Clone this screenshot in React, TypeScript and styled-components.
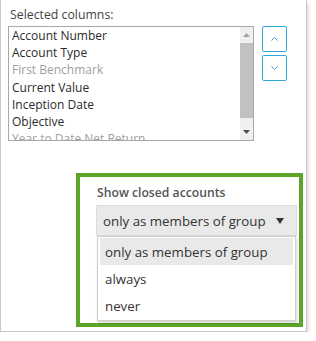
import * as React from 'react';
import styled, { createGlobalStyle } from 'styled-components';

const GlobalStyle = createGlobalStyle`
  html, body {
    margin: 0;
    padding: 0;
    background: #ffffff;
  }
  body {
    font-family: 'Open Sans', 'Noto Sans', Arial, sans-serif;
    color: #333333;
  }
`;

const Panel = styled.div`
  box-sizing: border-box;
  width: 307px;
  height: 332px;
  background: #ffffff;
  border: 1px solid #c6c6c6;
  border-top: none;
  box-shadow: 2px 3px 3px rgba(0, 0, 0, 0.12);
  display: flex;
  flex-direction: column;
  padding: 7px 0 0 7px;
`;

const FieldLabel = styled.div`
  font-size: 12.3px;
  line-height: 16px;
  color: #444444;
  padding-left: 2px;
  height: 19px;
`;

const ColumnsRow = styled.div`
  display: flex;
  align-items: flex-start;
  gap: 8px;
`;

const ListBox = styled.div`
  box-sizing: border-box;
  width: 246px;
  height: 115px;
  border: 1px solid #a9a9a9;
  display: flex;
  overflow: hidden;
`;

const ListItems = styled.div`
  flex: 1;
  padding: 0 0 0 3px;
  overflow: hidden;
`;

const ListItem = styled.div<{ $muted?: boolean }>`
  font-size: 12px;
  line-height: 17.2px;
  white-space: nowrap;
  color: ${(p) => (p.$muted ? '#a0a0a0' : '#2b2b2b')};
`;

const ScrollTrack = styled.div`
  width: 13px;
  background: #f0f0f0;
  display: flex;
  flex-direction: column;
  align-items: center;
`;

const ScrollArrow = styled.div`
  height: 16px;
  display: flex;
  align-items: center;
  justify-content: center;
`;

const ScrollThumb = styled.div`
  width: 13px;
  height: 75px;
  background: #c1c1c1;
`;

const ScrollSpacer = styled.div`
  flex: 1;
`;

const MoveButtons = styled.div`
  display: flex;
  flex-direction: column;
  gap: 3px;
`;

const MoveButton = styled.button`
  box-sizing: border-box;
  width: 25px;
  height: 26px;
  padding: 0;
  background: #ffffff;
  border: 1px solid #2ea6de;
  border-radius: 2px;
  display: flex;
  align-items: center;
  justify-content: center;
  cursor: pointer;
`;

const Callout = styled.div`
  box-sizing: border-box;
  margin: 32px 0 0 68px;
  width: 227px;
  height: 154px;
  border: 4px solid #5da529;
  padding: 8px 2px 0 16px;
  display: flex;
  flex-direction: column;
`;

const GroupLabel = styled.div`
  font-size: 12.2px;
  line-height: 16px;
  color: #555555;
  font-weight: 600;
  height: 20px;
  padding-left: 1px;
`;

const SelectBox = styled.div`
  box-sizing: border-box;
  height: 31px;
  background: #e9e9e9;
  border: 1px solid #dcdcdc;
  display: flex;
  align-items: center;
  justify-content: space-between;
  padding: 0 12px 0 6px;
  font-size: 13.3px;
  color: #333333;
`;

const Caret = styled.span`
  width: 0;
  height: 0;
  border-left: 4px solid transparent;
  border-right: 4px solid transparent;
  border-top: 6px solid #333333;
`;

const DropList = styled.div`
  box-sizing: border-box;
  margin: 0 1px 0 1px;
  height: 85px;
  background: #ffffff;
  border: 1px solid #cfcfcf;
  box-shadow: 1px 2px 3px rgba(0, 0, 0, 0.18);
  padding: 1px 2px;
`;

const DropItem = styled.div<{ $active?: boolean }>`
  height: 27px;
  display: flex;
  align-items: center;
  padding-left: 5px;
  font-size: 13.3px;
  color: #333333;
  background: ${(p) => (p.$active ? '#e9e9e9' : 'transparent')};
`;

const Chevron = ({ up }: { up?: boolean }) => (
  <svg width="9" height="6" viewBox="0 0 9 6">
    <path
      d={up ? 'M1.5 4.5 L4.5 1.5 L7.5 4.5' : 'M1.5 1.5 L4.5 4.5 L7.5 1.5'}
      fill="none"
      stroke="#4a97c6"
      strokeWidth="1"
    />
  </svg>
);

const Tri = ({ up, color }: { up?: boolean; color: string }) => (
  <svg width="7" height="4" viewBox="0 0 7 4">
    <path d={up ? 'M0 4 L3.5 0 L7 4 Z' : 'M0 0 L3.5 4 L7 0 Z'} fill={color} />
  </svg>
);

const columns: { name: string; muted?: boolean }[] = [
  { name: 'Account Number' },
  { name: 'Account Type' },
  { name: 'First Benchmark', muted: true },
  { name: 'Current Value' },
  { name: 'Inception Date' },
  { name: 'Objective' },
  { name: 'Year to Date Net Return', muted: true },
];

const options = ['only as members of group', 'always', 'never'];

export default function App() {
  return (
    <>
      <GlobalStyle />
      <Panel>
        <FieldLabel>Selected columns:</FieldLabel>
        <ColumnsRow>
          <ListBox>
            <ListItems>
              {columns.map((c) => (
                <ListItem key={c.name} $muted={c.muted}>
                  {c.name}
                </ListItem>
              ))}
            </ListItems>
            <ScrollTrack>
              <ScrollArrow>
                <Tri up color="#a3a3a3" />
              </ScrollArrow>
              <ScrollThumb />
              <ScrollSpacer />
              <ScrollArrow>
                <Tri color="#505050" />
              </ScrollArrow>
            </ScrollTrack>
          </ListBox>
          <MoveButtons>
            <MoveButton aria-label="Move up">
              <Chevron up />
            </MoveButton>
            <MoveButton aria-label="Move down">
              <Chevron />
            </MoveButton>
          </MoveButtons>
        </ColumnsRow>
        <Callout>
          <GroupLabel>Show closed accounts</GroupLabel>
          <SelectBox>
            <span>only as members of group</span>
            <Caret />
          </SelectBox>
          <DropList>
            {options.map((o, i) => (
              <DropItem key={o} $active={i === 0}>
                {o}
              </DropItem>
            ))}
          </DropList>
        </Callout>
      </Panel>
    </>
  );
}
